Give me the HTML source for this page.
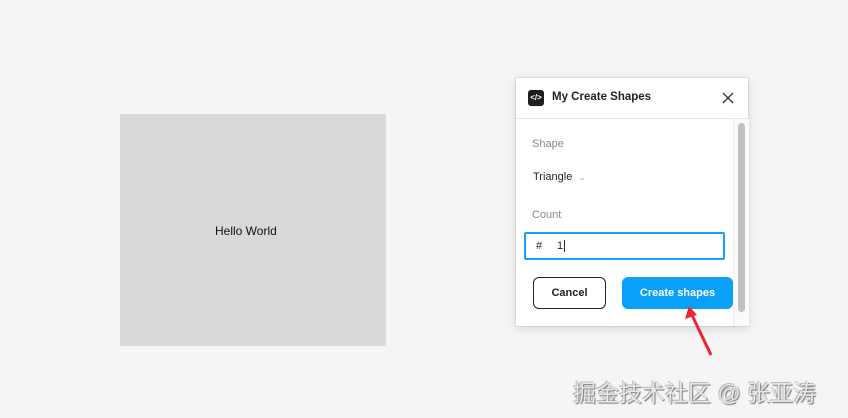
<!DOCTYPE html>
<html><head><meta charset="utf-8"><style>
body{margin:0;width:848px;height:418px;background:#f5f5f5;position:relative;overflow:hidden;font-family:"Liberation Sans",Arial,sans-serif;}
.frame{position:absolute;left:120px;top:114px;width:266px;height:232px;background:#d9d9d9;font-size:12px;color:#111;}
.frame span{position:absolute;left:95px;top:110px;}
.dlg{position:absolute;left:516px;top:78px;width:232px;height:248px;background:#fff;box-shadow:0 2px 10px rgba(0,0,0,.15),0 0 0 1px rgba(0,0,0,.06);}
.hdr{height:40px;border-bottom:1px solid #e6e6e6;position:relative;}
.ico{position:absolute;left:12px;top:12px;width:16px;height:16px;background:#1e1e1e;border-radius:3px;color:#fff;font-size:8px;line-height:16px;text-align:center;font-weight:bold}
.ttl{position:absolute;left:36px;top:13px;font-size:11.5px;font-weight:bold;color:#222;}
.x{position:absolute;left:205px;top:13px;}
.lbl{position:absolute;font-size:11px;color:#888;}
.sb{position:absolute;left:217px;top:41px;width:15px;height:207px;border-left:1px solid #eee;background:#fafafa}
.th{position:absolute;left:4px;top:4px;width:7px;height:189px;background:#c1c1c1;border-radius:4px}
.inp{position:absolute;left:8px;top:154px;width:201px;height:28px;border:2px solid #18a0fb;box-sizing:border-box;border-radius:2px;font-size:11px;color:#222}
.btn{position:absolute;top:199px;height:32px;box-sizing:border-box;border-radius:6px;font-size:11px;font-weight:bold;text-align:center;line-height:30px}
.wm{position:absolute;left:573px;top:374px;font-size:23px;color:#e8e8e8;font-family:"Liberation Sans","Noto Sans CJK SC",sans-serif;text-shadow:1px 1px 1px #777,-1px -1px 0 #bbb;white-space:nowrap}
</style></head><body>
<div class="frame"><span>Hello World</span></div>
<div class="dlg">
 <div class="hdr"><div class="ico">&lt;/&gt;</div><div class="ttl">My Create Shapes</div>
 <svg class="x" width="14" height="14" viewBox="0 0 14 14"><path d="M2 2L12 12M12 2L2 12" stroke="#333" stroke-width="1.3"/></svg></div>
 <div class="lbl" style="left:16px;top:60px">Shape</div>
 <div style="position:absolute;left:17px;top:93px;font-size:11px;color:#222">Triangle <span style="color:#aaa;font-size:9px;margin-left:3px">&#8964;</span></div>
 <div class="lbl" style="left:16px;top:131px">Count</div>
 <div class="inp"><span style="position:absolute;left:10px;top:6px">#</span><span style="position:absolute;left:31px;top:6px">1<span style="border-left:1px solid #222;margin-left:1px"></span></span></div>
 <div class="btn" style="left:17px;width:73px;border:1px solid #222;color:#222">Cancel</div>
 <div class="btn" style="left:106px;width:111px;background:#0aa0f7;color:#fff;line-height:32px">Create shapes</div>
 <div class="sb"><div class="th"></div></div>
</div>
<svg style="position:absolute;left:0;top:0" width="848" height="418"><path d="M711 355L691 313" stroke="#ee2233" stroke-width="3"/><path d="M689 306L685 319L697 315Z" fill="#ee2233"/></svg>
<div class="wm">掘金技术社区 @ 张亚涛</div>
</body></html>
